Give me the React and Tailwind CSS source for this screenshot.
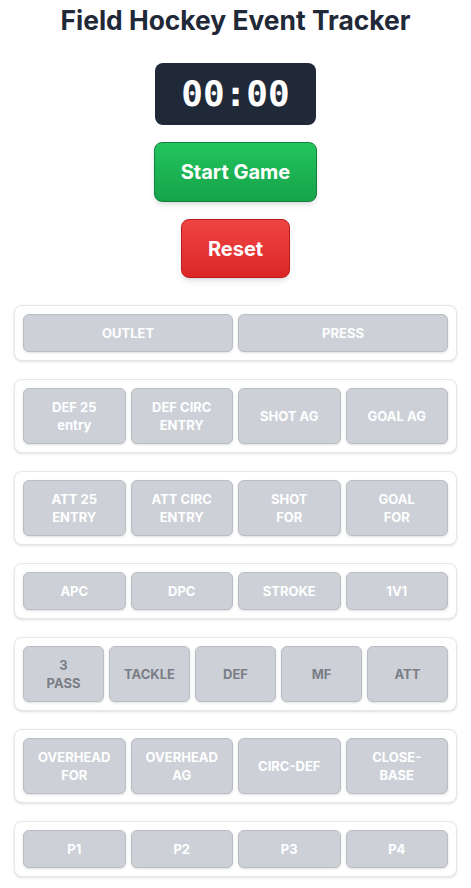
import React, { useState } from "react";

const rows = [
  { items: ["OUTLET", "PRESS"], cols: "grid-cols-2" },
  { items: [["DEF 25", "entry"], ["DEF CIRC", "ENTRY"], "SHOT AG", "GOAL AG"], cols: "grid-cols-4" },
  { items: [["ATT 25", "ENTRY"], ["ATT CIRC", "ENTRY"], ["SHOT", "FOR"], ["GOAL", "FOR"]], cols: "grid-cols-4" },
  { items: ["APC", "DPC", "STROKE", "1V1"], cols: "grid-cols-4" },
  { items: [["3", "PASS"], "TACKLE", "DEF", "MF", "ATT"], cols: "grid-cols-5", dark: true },
  { items: [["OVERHEAD", "FOR"], ["OVERHEAD", "AG"], "CIRC-DEF", ["CLOSE-", "BASE"]], cols: "grid-cols-4" },
  { items: ["P1", "P2", "P3", "P4"], cols: "grid-cols-4" },
];

const EventButton = ({ label, dark }) => {
  const lines = Array.isArray(label) ? label : [label];
  return (
    <button
      disabled
      className={`flex flex-col items-center justify-center rounded-md border border-[#b9bdc5] bg-[#cdd0d7] py-[9px] text-[13px] font-bold leading-[18px] shadow-sm ${
        dark ? "text-[#7a7e86]" : "text-white"
      }`}
    >
      {lines.map((l) => (
        <span key={l}>{l}</span>
      ))}
    </button>
  );
};

export default function App() {
  const [time] = useState("00:00");

  return (
    <div className="min-h-screen bg-white pb-3 font-['Inter',sans-serif]">
      <h1 className="pt-1 text-center text-[26.4px] font-bold leading-8 text-[#1f2937]">
        Field Hockey Event Tracker
      </h1>

      <div className="mt-[27px] flex flex-col items-center gap-[17px]">
        <div className="flex h-[62px] w-[161px] items-center justify-center rounded-lg bg-[#1f2937] font-['DejaVu_Sans_Mono',monospace] text-4xl font-bold text-white">
          {time}
        </div>
        <button className="h-[60px] w-[163px] rounded-lg border border-[#15803d] bg-gradient-to-b from-[#22c55e] to-[#16a34a] text-xl font-bold text-white shadow-md">
          Start Game
        </button>
        <button className="h-[59px] w-[109px] rounded-lg border border-[#b91c1c] bg-gradient-to-b from-[#ef4444] to-[#dc2626] text-xl font-bold text-white shadow-md">
          Reset
        </button>
      </div>

      <div className="mx-[14px] mt-[27px] flex flex-col gap-[18px]">
        {rows.map((row, i) => (
          <div key={i} className="rounded-lg border border-gray-200 bg-white p-2 shadow-sm">
            <div className={`grid ${row.cols} gap-[5px]`}>
              {row.items.map((item, j) => (
                <EventButton key={j} label={item} dark={row.dark} />
              ))}
            </div>
          </div>
        ))}
      </div>
    </div>
  );
}
